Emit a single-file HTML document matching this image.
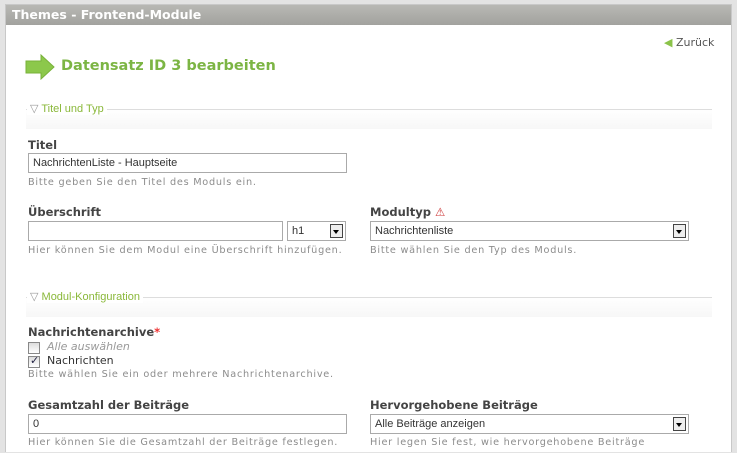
<!DOCTYPE html><html><head><style>
html,body{margin:0;width:737px;height:453px;overflow:hidden}
body{background:#e3e3e3;font-family:"DejaVu Sans",Verdana,sans-serif;position:relative}
.panel{position:absolute;left:5px;top:4px;width:725px;height:447px;background:#fff;border:1px solid #c8c8c8;border-bottom:0;overflow:hidden}
.bar{position:absolute;left:0;top:0;right:0;height:20px;background:linear-gradient(#b8b8b4,#a2a29e);color:#fff;font:bold 12.5px "DejaVu Sans",sans-serif;line-height:20px;padding-left:6px}
.a{position:absolute;white-space:nowrap}
.lbl{font:bold 11.5px "DejaVu Sans",sans-serif;color:#444}
.help{font-size:9.7px;color:#8c8c8c;letter-spacing:.75px}
.inp{border:1px solid #aaa;background:#fff;height:20px;box-sizing:border-box;font:11px "Liberation Sans",sans-serif;color:#333;line-height:18px;padding-left:4px}
.dd{position:absolute;right:2px;top:2px;width:13px;height:14px;border:1px solid #444;background:#eee;box-sizing:border-box}
.dd:after{content:"";position:absolute;left:2px;top:5px;border:3.5px solid transparent;border-top:4px solid #000}
.leg{font:11px "Liberation Sans",sans-serif;color:#8ab83a}
.line{height:1px;background:#ddd}
.fs{background:linear-gradient(#fff,#f7f7f7)}
.cb{width:10px;height:10px;border:1px solid #888;background:linear-gradient(#ddd,#fff)}
</style></head><body>
<div class="panel">
<div class="bar">Themes - Frontend-Module</div>
<div class="a" style="left:658px;top:31px;font-size:11px;color:#555"><span style="color:#8bc34a;font-size:11px">◀</span>&nbsp;Zurück</div>
<svg class="a" style="left:19px;top:49px" width="30" height="26"><path d="M1 7h15V1l13 12-13 12v-6H1z" fill="#8cc84b" stroke="#79b23a"/></svg>
<div class="a" style="left:55px;top:53px;font:bold 14.5px 'DejaVu Sans',sans-serif;color:#7cb544">Datensatz ID 3 bearbeiten</div>
<div class="a fs" style="left:20px;top:104px;width:686px;height:20px"></div>
<div class="a line" style="left:20px;top:104px;width:686px"></div>
<div class="a leg" style="left:21px;top:97px;background:#fff;padding:0 3px"><span style="color:#999">▽</span> Titel und Typ</div>
<div class="a lbl" style="left:22px;top:133px">Titel</div>
<div class="a inp" style="left:22px;top:148px;width:319px">NachrichtenListe - Hauptseite</div>
<div class="a help" style="left:22px;top:172px">Bitte geben Sie den Titel des Moduls ein.</div>
<div class="a lbl" style="left:22px;top:200px">Überschrift</div>
<div class="a inp" style="left:22px;top:216px;width:255px"></div>
<div class="a inp" style="left:281px;top:216px;width:59px">h1<span class="dd"></span></div>
<div class="a help" style="left:22px;top:240px">Hier können Sie dem Modul eine Überschrift hinzufügen.</div>
<div class="a lbl" style="left:364px;top:200px">Modultyp <span style="color:#c33">⚠</span></div>
<div class="a inp" style="left:364px;top:216px;width:319px">Nachrichtenliste<span class="dd"></span></div>
<div class="a help" style="left:364px;top:240px">Bitte wählen Sie den Typ des Moduls.</div>
<div class="a fs" style="left:20px;top:292px;width:686px;height:20px"></div>
<div class="a line" style="left:20px;top:292px;width:686px"></div>
<div class="a leg" style="left:21px;top:285px;background:#fff;padding:0 3px"><span style="color:#999">▽</span> Modul-Konfiguration</div>
<div class="a lbl" style="left:22px;top:320px">Nachrichtenarchive<span style="color:#e33">*</span></div>
<div class="a cb" style="left:22px;top:337px"></div>
<div class="a" style="left:41px;top:335px;font-size:11px;color:#999;font-style:italic">Alle auswählen</div>
<div class="a cb" style="left:22px;top:351px"><span style="position:absolute;left:1px;top:-3px;font-size:11px;color:#224">✓</span></div>
<div class="a" style="left:41px;top:349px;font-size:11px;color:#333">Nachrichten</div>
<div class="a help" style="left:22px;top:364px">Bitte wählen Sie ein oder mehrere Nachrichtenarchive.</div>
<div class="a lbl" style="left:22px;top:393px">Gesamtzahl der Beiträge</div>
<div class="a inp" style="left:22px;top:409px;width:319px">0</div>
<div class="a help" style="left:22px;top:432px">Hier können Sie die Gesamtzahl der Beiträge festlegen.</div>
<div class="a lbl" style="left:364px;top:393px">Hervorgehobene Beiträge</div>
<div class="a inp" style="left:364px;top:409px;width:319px">Alle Beiträge anzeigen<span class="dd"></span></div>
<div class="a help" style="left:364px;top:432px">Hier legen Sie fest, wie hervorgehobene Beiträge</div>
</div>
</body></html>
